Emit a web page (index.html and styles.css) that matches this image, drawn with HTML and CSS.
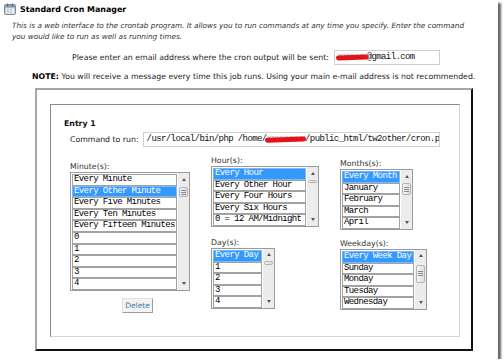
FILE: index.html
```html
<!DOCTYPE html>
<html>
<head>
<meta charset="utf-8">
<title>Standard Cron Manager</title>
<link rel="stylesheet" href="styles.css">
</head>
<body>
<div class="shot">
  <div class="title">
    <svg class="ico" width="12" height="12" viewBox="0 0 12 12">
      <rect x="0.5" y="1.5" width="11" height="10" rx="1" fill="#c9d2dc" stroke="#7d8b99"/>
      <rect x="1" y="2" width="10" height="2.5" fill="#8e9cab"/>
      <rect x="2" y="5.5" width="8" height="5" fill="#eef2f5"/>
      <rect x="3" y="0.5" width="1" height="3" fill="#5d6b79"/>
      <rect x="8" y="0.5" width="1" height="3" fill="#5d6b79"/>
      <path d="M3 7h2M6 7h2M3 9h2M6 9h2" stroke="#9aa7b4" stroke-width="1"/>
    </svg>
    <span>Standard Cron Manager</span>
  </div>
  <p class="desc">This is a web interface to the crontab program. It allows you to run commands at any time you specify. Enter the command<br>you would like to run as well as running times.</p>
  <div class="email-row">
    <span>Please enter an email address where the cron output will be sent:</span>
    <div class="field email"><span class="redact">xxxxxx</span>@gmail.com</div>
  </div>
  <p class="note"><b>NOTE:</b> You will receive a message every time this job runs. Using your main e-mail address is not recommended.</p>
  <div class="outer">
    <div class="inner">
      <div class="entry">Entry 1</div>
      <div class="cmd-row">
        <span>Command to run:</span>
        <div class="field cmd">/usr/local/bin/php /home/<span class="redact">xxxxxxxx</span>/public_html/tw2other/cron.p</div>
      </div>
      <div class="cols">
        <div class="col col-min">
          <div class="lbl">Minute(s):</div>
          <div class="lb lb-min">
            <div class="opts">
              <div class="opt">Every Minute</div>
              <div class="opt sel">Every Other Minute</div>
              <div class="opt">Every Five Minutes</div>
              <div class="opt">Every Ten Minutes</div>
              <div class="opt">Every Fifteen Minutes</div>
              <div class="opt">0</div>
              <div class="opt">1</div>
              <div class="opt">2</div>
              <div class="opt">3</div>
              <div class="opt">4</div>
            </div>
            <div class="sb"><div class="up"></div><div class="thumb grip t-min"></div><div class="dn"></div></div>
          </div>
          <button class="del">Delete</button>
        </div>
        <div class="col col-hd">
          <div class="lbl">Hour(s):</div>
          <div class="lb lb-hour">
            <div class="opts">
              <div class="opt sel">Every Hour</div>
              <div class="opt">Every Other Hour</div>
              <div class="opt">Every Four Hours</div>
              <div class="opt">Every Six Hours</div>
              <div class="opt">0 = 12 AM/Midnight</div>
            </div>
            <div class="sb"><div class="up"></div><div class="thumb t-hour"></div><div class="dn"></div></div>
          </div>
          <div class="lbl lbl-day">Day(s):</div>
          <div class="lb lb-day">
            <div class="opts">
              <div class="opt sel">Every Day</div>
              <div class="opt">1</div>
              <div class="opt">2</div>
              <div class="opt">3</div>
              <div class="opt">4</div>
            </div>
            <div class="sb"><div class="up"></div><div class="thumb t-day"></div><div class="dn"></div></div>
          </div>
        </div>
        <div class="col col-mw">
          <div class="lbl">Months(s):</div>
          <div class="lb lb-month">
            <div class="opts">
              <div class="opt sel">Every Month</div>
              <div class="opt">January</div>
              <div class="opt">February</div>
              <div class="opt">March</div>
              <div class="opt">April</div>
            </div>
            <div class="sb"><div class="up"></div><div class="thumb grip t-month"></div><div class="dn"></div></div>
          </div>
          <div class="lbl lbl-week">Weekday(s):</div>
          <div class="lb lb-week">
            <div class="opts">
              <div class="opt sel">Every Week Day</div>
              <div class="opt">Sunday</div>
              <div class="opt">Monday</div>
              <div class="opt">Tuesday</div>
              <div class="opt">Wednesday</div>
            </div>
            <div class="sb"><div class="up"></div><div class="thumb grip t-week"></div><div class="dn"></div></div>
          </div>
        </div>
      </div>
    </div>
  </div>
</div>
</body>
</html>
```
FILE: styles.css
```css
* { box-sizing: border-box; }
body {
  margin: 0;
  background: #fff;
  font-family: "DejaVu Sans", Verdana, sans-serif;
  color: #222;
}
.shot {
  width: 498px;
  height: 359px;
  background: #fff;
  box-shadow: 3px 3px 2px #666;
  overflow: hidden;
  display: flex;
  flex-direction: column;
}
.title {
  display: flex;
  align-items: center;
  padding: 3px 0 0 4px;
  height: 15px;
  font-weight: bold;
  font-size: 7.9px;
  color: #000;
}
.ico { margin-right: 4px; flex: none; }
.desc {
  margin: 6px 0 0 12px;
  font-style: italic;
  font-size: 7.3px;
  line-height: 10.5px;
  white-space: nowrap;
  color: #333;
}
.email-row {
  display: flex;
  align-items: center;
  margin: 8px 0 0 72px;
  height: 15px;
  font-size: 7.8px;
  white-space: nowrap;
}
.field {
  border: 1px solid #cfcfcf;
  background: #fff;
  font-family: "Liberation Mono", "Courier New", monospace;
  font-size: 9px;
  letter-spacing: -0.6px;
  white-space: nowrap;
  overflow: hidden;
  height: 15px;
  line-height: 13px;
  padding-left: 3px;
  color: #111;
}
.email { width: 106px; margin-left: 5px; }
.redact { position: relative; color: #999; }
.redact::after {
  content: "";
  position: absolute;
  left: -2px;
  right: -1px;
  top: 3px;
  height: 5px;
  border-radius: 3px;
  background: #e5121b;
  transform: rotate(-2deg);
}
.note {
  margin: 6px 0 0 32px;
  font-size: 7.8px;
  line-height: 11px;
  white-space: nowrap;
}
.note b { color: #000; }
.outer {
  margin: 6px 0 0 35px;
  width: 438px;
  height: 263px;
  border: 2px solid;
  border-color: #a6a6a6 #111 #111 #a6a6a6;
  padding: 14px 0 0 13px;
}
.inner {
  width: 410px;
  height: 233px;
  border: 1px solid;
  border-color: #8a8a8a #d6d6d6 #d6d6d6 #8a8a8a;
  padding: 12.5px 0 0 13px;
}
.entry {
  font-weight: bold;
  font-size: 7.8px;
  line-height: 11px;
  color: #111;
}
.cmd-row {
  display: flex;
  align-items: center;
  margin: 3.5px 0 0 6px;
  height: 15px;
  font-size: 7.8px;
  white-space: nowrap;
}
.cmd { width: 297px; margin-left: 4px; }
.cols {
  display: flex;
  align-items: flex-start;
  gap: 21px;
  margin-left: 6px;
}
.col { display: flex; flex-direction: column; align-items: flex-start; }
.col-min { margin-top: 15px; }
.col-hd { margin-top: 9px; }
.col-mw { margin-top: 12px; }
.lbl {
  font-size: 7.8px;
  line-height: 10px;
  height: 10px;
  color: #333;
  white-space: nowrap;
}
.lbl-day { margin-top: 11px; }
.lbl-week { margin-top: 9px; }
.lb {
  display: flex;
  border: 1px solid #9a9a9a;
  background: #fff;
}
.lb-min { width: 120px; }
.lb-hour { width: 108px; }
.lb-day { width: 64px; }
.lb-month { width: 73px; }
.lb-week { width: 87px; }
.opts {
  flex: 1;
  min-width: 0;
  padding: 1px 1px 0 1px;
  display: flex;
  flex-direction: column;
}
.opt {
  height: 11.6px;
  border: 1px solid #a2a2a2;
  font-family: "Liberation Mono", "Courier New", monospace;
  font-size: 9px;
  letter-spacing: -0.6px;
  line-height: 9.6px;
  padding-left: 1px;
  white-space: nowrap;
  overflow: hidden;
  color: #000;
  background: #fff;
}
.opt.sel {
  background: #3399ff;
  border-color: #7fb8f0;
  color: #fff;
}
.sb {
  width: 11px;
  flex: none;
  background: #ececec;
  display: flex;
  flex-direction: column;
  align-items: center;
}
.up, .dn {
  height: 12px;
  width: 100%;
  display: flex;
  align-items: center;
  justify-content: center;
}
.up::before, .dn::before {
  content: "";
  width: 0;
  height: 0;
  border-left: 2.5px solid transparent;
  border-right: 2.5px solid transparent;
}
.up::before { border-bottom: 3px solid #555; }
.dn::before { border-top: 3px solid #555; }
.dn { margin-top: auto; }
.thumb {
  width: 9px;
  border: 1px solid #b4b4b4;
  border-radius: 2px;
  background: linear-gradient(to right, #f6f6f6, #dedede);
  display: flex;
  align-items: center;
  justify-content: center;
}
.grip::before {
  content: "";
  width: 5px;
  height: 5px;
  background: repeating-linear-gradient(to bottom, #8a8a8a 0 1px, transparent 1px 2px);
}
.t-min { margin-top: 2px; height: 10px; }
.t-hour { margin-top: 1px; height: 3px; }
.t-day { margin-top: 0; height: 4px; }
.t-month { margin-top: 1px; height: 12px; }
.t-week { margin-top: 3px; height: 18px; }
.del {
  margin: 7px 0 0 52px;
  width: 31px;
  height: 15px;
  padding: 0;
  border: 1px solid;
  border-color: #e0e0e0 #9c9c9c #9c9c9c #e0e0e0;
  background: #f3f3f3;
  color: #3c7caa;
  font-family: "DejaVu Sans", Verdana, sans-serif;
  font-size: 7.5px;
}
```
